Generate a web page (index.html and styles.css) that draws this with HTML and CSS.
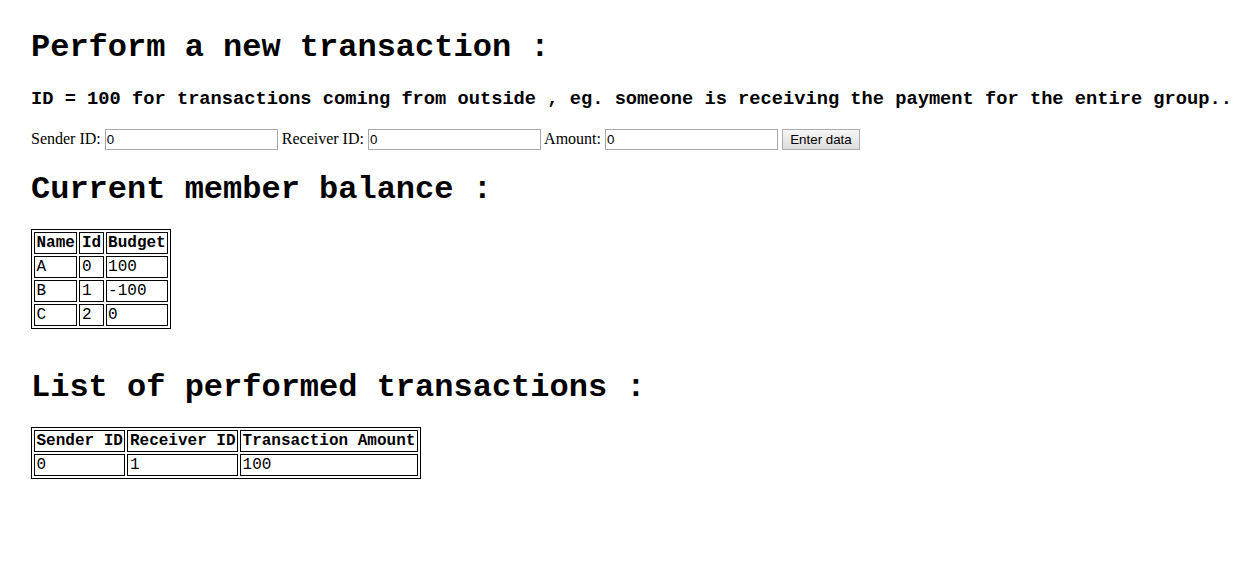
FILE: index.html
```html
<!DOCTYPE html>
<html lang="en">
<head>
<meta charset="utf-8">
<title>Transactions</title>
<link rel="stylesheet" href="styles.css">
</head>
<body>
<div class="page">
  <h1 class="title">Perform a new transaction :</h1>
  <h3 class="note">ID = 100 for transactions coming from outside , eg. someone is receiving the payment for the entire group..</h3>
  <form class="entry">
    <label class="field">Sender ID: <input class="text-input" type="text" value="0"></label>
    <label class="field">Receiver ID: <input class="text-input" type="text" value="0"></label>
    <label class="field">Amount: <input class="text-input" type="text" value="0"></label>
    <button class="submit" type="button">Enter data</button>
  </form>
  <h1 class="title">Current member balance :</h1>
  <div class="balance">
    <table class="grid">
      <tr><th>Name</th><th>Id</th><th>Budget</th></tr>
      <tr><td>A</td><td>0</td><td>100</td></tr>
      <tr><td>B</td><td>1</td><td>-100</td></tr>
      <tr><td>C</td><td>2</td><td>0</td></tr>
    </table>
  </div>
  <h1 class="title">List of performed transactions :</h1>
  <table class="grid">
    <tr><th>Sender ID</th><th>Receiver ID</th><th>Transaction Amount</th></tr>
    <tr><td>0</td><td>1</td><td>100</td></tr>
  </table>
</div>
</body>
</html>
```
FILE: styles.css
```css
html, body {
  background: #ffffff;
}
body {
  margin: 8px;
  font-family: "Liberation Serif", "Times New Roman", serif;
  font-size: 16px;
  color: #000;
}
.page {
  padding: 0 23px;
}
.title {
  font-family: "Liberation Mono", "Courier New", monospace;
  font-size: 32px;
  font-weight: bold;
  margin: 21.44px 0;
  line-height: normal;
}
.note {
  font-family: "Liberation Mono", "Courier New", monospace;
  font-size: 18.72px;
  font-weight: bold;
  margin: 18.72px 0;
  white-space: nowrap;
}
.entry {
  margin: 0;
  white-space: nowrap;
}
.field {
  font-family: "Liberation Serif", "Times New Roman", serif;
  font-size: 16px;
}
.text-input {
  box-sizing: border-box;
  width: 173px;
  height: 21px;
  margin: 0;
  padding: 1px 1px;
  border: 1px solid #a9a9a9;
  font-family: "Liberation Sans", Arial, sans-serif;
  font-size: 13.33px;
  color: #000;
  background: #fff;
  vertical-align: baseline;
}
.submit {
  box-sizing: border-box;
  height: 21px;
  width: 78px;
  margin: 0;
  padding: 0 6px;
  border: 1px solid #adadad;
  border-radius: 0;
  background: linear-gradient(#f6f6f6, #dddddd);
  font-family: "Liberation Sans", Arial, sans-serif;
  font-size: 13.33px;
  color: #000;
}
.balance {
  padding-bottom: 18px;
}
.grid {
  border: 1px solid #000;
  border-spacing: 2px;
  font-family: "Liberation Mono", "Courier New", monospace;
  font-size: 16px;
}
.grid th,
.grid td {
  border: 1px solid #000;
  padding: 1px 1.5px;
  line-height: 18px;
  text-align: left;
}
.grid th {
  font-weight: bold;
}
.grid td {
  font-weight: normal;
}
```
